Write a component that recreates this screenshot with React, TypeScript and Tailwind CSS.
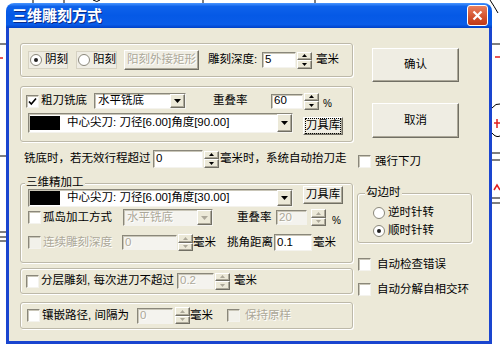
import React from 'react';

const bevel =
  'border border-t-white border-l-white border-r-[#716f64] border-b-[#716f64] shadow-[inset_-1px_-1px_0_#aca899]';
const sunken =
  'border border-t-[#8a877a] border-l-[#8a877a] border-r-[#f4f3ee] border-b-[#f4f3ee] shadow-[inset_1px_1px_0_#c9c6b8]';
const group = 'border border-[#bdb9a9] rounded-[3px] shadow-[inset_1px_1px_0_#fff,1px_1px_0_#fff]';
const grayText = 'text-[#aca899] [text-shadow:1px_1px_0_#fff]';

function T({ children, className = '' }: { children: React.ReactNode; className?: string }) {
  return <span className={`shrink-0 whitespace-nowrap leading-none ${className}`}>{children}</span>;
}

function Check({ checked = false, disabled = false, className = '' }: { checked?: boolean; disabled?: boolean; className?: string }) {
  return (
    <span className={`shrink-0 w-[13px] h-[13px] flex items-center justify-center ${disabled ? 'bg-[#f2f1ea]' : 'bg-white'} ${sunken} ${className}`}>
      {checked && (
        <svg width="9" height="9" viewBox="0 0 9 9">
          <path d="M1 4.5L3.3 7L8 1.5" stroke="#000" strokeWidth="1.6" fill="none" />
        </svg>
      )}
    </span>
  );
}

function Radio({ on = false, className = '' }: { on?: boolean; className?: string }) {
  return (
    <span className={`shrink-0 w-[12px] h-[12px] rounded-full bg-white border border-[#8a877a] flex items-center justify-center ${className}`}>
      {on && <span className="w-[4px] h-[4px] rounded-full bg-[#222]" />}
    </span>
  );
}

function Spin({ disabled = false, className = '' }: { disabled?: boolean; className?: string }) {
  const c = disabled ? '#aca899' : '#000';
  return (
    <div className={`shrink-0 flex flex-col w-[15px] h-[17px] ${className}`}>
      <div className={`flex-1 flex items-center justify-center bg-[#ece9d8] ${bevel}`}>
        <svg width="5" height="3" viewBox="0 0 5 3"><path d="M2.5 0L5 3H0Z" fill={c} /></svg>
      </div>
      <div className={`flex-1 flex items-center justify-center bg-[#ece9d8] ${bevel}`}>
        <svg width="5" height="3" viewBox="0 0 5 3"><path d="M0 0H5L2.5 3Z" fill={c} /></svg>
      </div>
    </div>
  );
}

function Input({ value, w, h = 16, disabled = false, className = '' }: { value: string; w: number; h?: number; disabled?: boolean; className?: string }) {
  return (
    <div
      className={`shrink-0 flex items-center pl-[2px] text-[11.5px] leading-none ${disabled ? `bg-[#f4f3ee] ${grayText}` : 'bg-white'} ${sunken} ${className}`}
      style={{ width: w, height: h }}
    >
      {value}
    </div>
  );
}

function Arrow({ disabled = false }: { disabled?: boolean }) {
  return (
    <div className={`shrink-0 w-[15px] self-stretch flex items-center justify-center bg-[#ece9d8] ${bevel}`}>
      <svg width="7" height="4" viewBox="0 0 7 4"><path d="M0 0H7L3.5 4Z" fill={disabled ? '#aca899' : '#000'} /></svg>
    </div>
  );
}

function Select({ value, w, h, disabled = false, className = '' }: { value: string; w: number; h: number; disabled?: boolean; className?: string }) {
  return (
    <div className={`shrink-0 flex items-stretch ${disabled ? 'bg-[#f4f3ee]' : 'bg-white'} ${sunken} ${className}`} style={{ width: w, height: h }}>
      <div className={`flex-1 flex items-center pl-[3px] text-[11.5px] leading-none ${disabled ? grayText : ''}`}>{value}</div>
      <Arrow disabled={disabled} />
    </div>
  );
}

function ToolCombo({ text, h, className = '' }: { text: string; h: number; className?: string }) {
  return (
    <div className={`shrink-0 w-[265px] flex items-stretch bg-white ${sunken} ${className}`} style={{ height: h }}>
      <div className="flex-1 flex items-center">
        <span className="ml-[1px] w-[30px] h-[14px] bg-black" />
        <T className="ml-[7px]">{text}</T>
      </div>
      <Arrow />
    </div>
  );
}

function Btn({ children, className = '', focused = false }: { children: React.ReactNode; className?: string; focused?: boolean }) {
  return (
    <div className={`shrink-0 flex items-center justify-center whitespace-nowrap bg-[#efede3] leading-none ${bevel} ${className}`}>
      {focused ? <span className="whitespace-nowrap border border-dotted border-black py-[1px]">{children}</span> : children}
    </div>
  );
}

function Backdrop() {
  return (
    <svg className="absolute inset-0" width="500" height="349" viewBox="0 0 500 349">
      <g stroke="#000" strokeWidth="1" fill="none">
        <path d="M33 0V4M64 0V3M93 0Q97 3 100 0M203 0V3M315 0V3" />
        <path d="M490 0Q494 6 498 13" />
        <path d="M0 44H6M0 156H6M0 232H6M0 237H6M0 241H6" />
        <path d="M492 44H500M492 108Q496 103 500 104M492 133Q496 138 500 136M492 153H500M492 160H500M492 198H500M492 203H500" />
      </g>
      <g stroke="#e02020" strokeWidth="1.5" fill="none">
        <path d="M0 58H3M495 57H500M494 123H500M497 119V128M494 190L497 185L500 190" />
      </g>
    </svg>
  );
}

export default function App() {
  return (
    <div className="relative w-[500px] h-[349px] overflow-hidden bg-white font-[family-name:Liberation_Sans,Noto_Sans_CJK_SC,sans-serif] text-black">
      <Backdrop />
      <div className="relative ml-[6px] pt-[3px] w-[486px] flex flex-col">
        {/* title bar */}
        <div className="h-[25px] rounded-t-[8px] flex items-center pl-[6px] pr-[4px] bg-[linear-gradient(to_bottom,#4a96ff_0%,#0e62ea_14%,#0559e6_50%,#0a5ce8_86%,#0041c7_100%)]">
          <T className="text-white font-bold text-[15px] [text-shadow:1px_1px_0_#0a2a8a]">三维雕刻方式</T>
          <div className="ml-auto w-[21px] h-[21px] rounded-[3px] border border-white bg-[linear-gradient(to_bottom,#e9805f,#d1502c_60%,#c03a18)] flex items-center justify-center">
            <svg width="11" height="11" viewBox="0 0 11 11">
              <path d="M1.5 1.5L9.5 9.5M9.5 1.5L1.5 9.5" stroke="#fff" strokeWidth="2.2" />
            </svg>
          </div>
        </div>

        {/* body */}
        <div className="h-[316px] bg-[#ece9d8] border-x-[3px] border-b-[3px] border-[#1a45cf] flex pl-[11px] pt-[15px] text-[11.5px]">
          {/* left column */}
          <div className="w-[333px] shrink-0 flex flex-col">
            {/* depth */}
            <div className={`h-[34px] flex items-center pl-[7px] ${group}`}>
              <div className="w-[40px] h-[18px] flex items-center border border-[#d6d2c2] bg-[#efede4]">
                <Radio on className="ml-[1px]" />
                <T className="ml-[3px]">阴刻</T>
              </div>
              <div className="ml-[8px] w-[41px] h-[18px] flex items-center border border-[#d6d2c2] bg-[#efede4]">
                <Radio className="ml-[1px]" />
                <T className="ml-[3px]">阳刻</T>
              </div>
              <Btn className={`ml-[7px] w-[75px] h-[20px] ${grayText}`}>阳刻外接矩形</Btn>
              <T className="ml-[9px] w-[54px]">雕刻深度:</T>
              <Input value="5" w={34} h={16} />
              <Spin className="ml-[1px]" />
              <T className="ml-[4px]">毫米</T>
            </div>

            {/* rough milling */}
            <div className={`mt-[9px] h-[56px] flex flex-col pt-[6px] ${group}`}>
              <div className="h-[16px] flex items-center">
                <Check checked className="ml-[5px]" />
                <T className="ml-[2px] w-[53px]">粗刀铣底</T>
                <Select value="水平铣底" w={92} h={16} />
                <T className="ml-[27px] w-[36px]">重叠率</T>
                <Input value="60" w={32} h={15} className="ml-[22px]" />
                <Spin className="ml-[1px]" />
                <T className="ml-[4px] self-end text-[10px]">%</T>
              </div>
              <div className="mt-[4px] flex items-start">
                <ToolCombo text="中心尖刀: 刀径[6.00]角度[90.00]" h={20} className="ml-[7px]" />
                <Btn focused className="ml-[10px] mt-[4px] w-[40px] h-[18px]">刀具库</Btn>
              </div>
            </div>

            {/* lift row */}
            <div className="mt-[8px] h-[18px] flex items-center">
              <T className="ml-[4px] w-[129px]">铣底时，若无效行程超过</T>
              <Input value="0" w={50} h={18} />
              <Spin className="ml-[1px]" />
              <T className="ml-[1px]">毫米时，系统自动抬刀走</T>
            </div>

            {/* finishing */}
            <div className={`relative mt-[15px] h-[80px] flex flex-col pt-[2px] ${group}`}>
              <T className="absolute -top-[7px] left-[4px] px-[1px] bg-[#ece9d8]">三维精加工</T>
              <div className="flex items-start">
                <ToolCombo text="中心尖刀: 刀径[6.00]角度[30.00]" h={18} className="ml-[7px] mt-[3px]" />
                <Btn className="ml-[10px] w-[40px] h-[18px]">刀具库</Btn>
              </div>
              <div className="mt-[2px] h-[17px] flex items-center">
                <Check className="ml-[7px]" />
                <T className="ml-[2px] w-[80px]">孤岛加工方式</T>
                <Select value="水平铣底" w={90} h={17} disabled />
                <T className="ml-[24px] w-[39px]">重叠率</T>
                <Input value="20" w={31} h={15} disabled />
                <Spin disabled className="ml-[4px]" />
                <T className="ml-[6px] self-end text-[10px]">%</T>
              </div>
              <div className="mt-[8px] h-[17px] flex items-center">
                <Check disabled className="ml-[7px]" />
                <T className={`ml-[2px] w-[79px] ${grayText}`}>连续雕刻深度</T>
                <Input value="0" w={55} h={15} disabled />
                <Spin disabled className="ml-[1px]" />
                <T className="w-[34px]">毫米</T>
                <T className="w-[47px]">挑角距离</T>
                <Input value="0.1" w={38} h={17} />
                <T className="ml-[1px]">毫米</T>
              </div>
            </div>

            {/* layered */}
            <div className={`mt-[5px] h-[26px] flex items-center ${group}`}>
              <Check className="ml-[5px]" />
              <T className="ml-[2px] w-[136px]">分层雕刻, 每次进刀不超过</T>
              <Input value="0.2" w={37} h={16} disabled />
              <Spin disabled className="ml-[1px]" />
              <T className="ml-[4px]">毫米</T>
            </div>

            {/* inlay */}
            <div className={`mt-[8px] h-[27px] flex items-center ${group}`}>
              <Check className="ml-[6px]" />
              <T className="ml-[2px] w-[95px]">镶嵌路径, 间隔为</T>
              <Input value="0" w={36} h={16} disabled />
              <Spin disabled className="ml-[2px]" />
              <T className="w-[37px]">毫米</T>
              <Check disabled />
              <T className={`ml-[5px] ${grayText}`}>保持原样</T>
            </div>
          </div>

          {/* right column */}
          <div className="flex flex-col">
            <Btn className="ml-[19px] mt-[5px] w-[87px] h-[34px]">确认</Btn>
            <Btn className="ml-[19px] mt-[21px] w-[87px] h-[35px]">取消</Btn>
            <div className="mt-[17px] h-[13px] flex items-center">
              <Check className="ml-[5px]" />
              <T className="ml-[4px]">强行下刀</T>
            </div>
            <div className={`relative ml-[4px] mt-[25px] w-[115px] h-[50px] flex flex-col pt-[13px] ${group}`}>
              <T className="absolute -top-[7px] left-[7px] px-[1px] bg-[#ece9d8]">勾边时</T>
              <div className="flex items-center">
                <Radio className="ml-[15px]" />
                <T className="ml-[3px]">逆时针转</T>
              </div>
              <div className="mt-[6px] flex items-center">
                <Radio on className="ml-[15px]" />
                <T className="ml-[3px]">顺时针转</T>
              </div>
            </div>
            <div className="mt-[15px] h-[13px] flex items-center">
              <Check className="ml-[5px]" />
              <T className="ml-[6px]">自动检查错误</T>
            </div>
            <div className="mt-[12px] h-[13px] flex items-center">
              <Check className="ml-[5px]" />
              <T className="ml-[6px]">自动分解自相交环</T>
            </div>
          </div>
        </div>
      </div>
    </div>
  );
}
